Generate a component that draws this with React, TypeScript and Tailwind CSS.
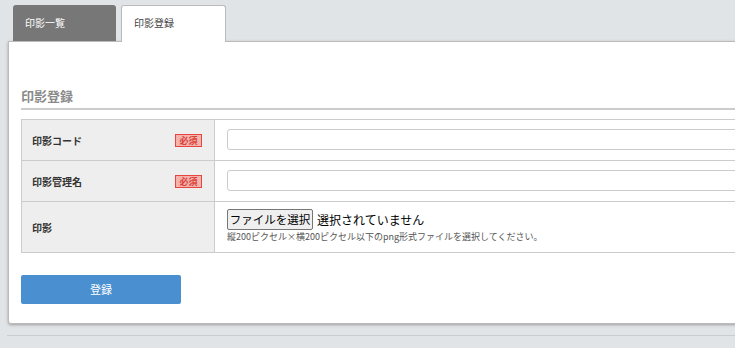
const jp = "font-['Meiryo','Noto_Sans_CJK_JP',sans-serif]";

function RequiredBadge() {
  return (
    <span className="inline-flex h-[13px] w-[27px] items-center justify-center border border-[#e5463f] bg-[#f5b3ac] text-[9px] leading-none text-[#d9433c]">
      必須
    </span>
  );
}

function Row({ label, required, children, tall }: { label: string; required?: boolean; children: React.ReactNode; tall?: boolean }) {
  return (
    <tr className={tall ? "h-[51px]" : "h-[41px]"}>
      <th className="border border-[#cccccc] bg-[#eeeeee] pl-[10px] pr-[12px] text-left align-middle">
        <div className="flex items-center justify-between">
          <span className="text-[10px] font-bold text-[#333]">{label}</span>
          {required && <RequiredBadge />}
        </div>
      </th>
      <td className="border border-[#cccccc] pl-[12px] align-middle">{children}</td>
    </tr>
  );
}

export default function App() {
  return (
    <div className={`h-[348px] w-[735px] overflow-hidden bg-[#e1e4e7] pt-[5px] ${jp}`}>
      <div className="flex h-[36px] gap-[5px] pl-[13px]">
        <div className="h-[36px] w-[103px] rounded-t-[3px] bg-[#777777] pl-[12px] pt-[10px] text-[10px] text-white">
          印影一覧
        </div>
        <div className="relative z-10 h-[37px] w-[105px] rounded-t-[3px] border border-b-0 border-[#bbbbbb] bg-white pl-[12px] pt-[9px] text-[10px] text-[#444]">
          印影登録
        </div>
      </div>
      <div className="ml-[8px] h-[283px] w-[800px] rounded-bl-[3px] border border-[#bbbbbb] bg-white pl-[12px] pt-[45px] shadow-[0_1px_3px_rgba(0,0,0,0.3)]">
        <div className="border-b-2 border-[#cccccc] pb-[3px] text-[13px] font-bold leading-[18px] text-[#8a8a8a]">
          印影登録
        </div>
        <table className="mt-[9px] w-[790px] table-fixed border-collapse">
          <colgroup>
            <col className="w-[193px]" />
            <col />
          </colgroup>
          <tbody>
            <Row label="印影コード" required>
              <div className="mb-[2px] h-[21px] w-[600px] rounded-[3px] border border-[#cccccc]" />
            </Row>
            <Row label="印影管理名" required>
              <div className="mb-[2px] h-[21px] w-[600px] rounded-[3px] border border-[#cccccc]" />
            </Row>
            <Row label="印影" tall>
              <div className="flex items-center gap-[4px]">
                <span className="flex h-[21px] w-[86px] items-center justify-center rounded-[2px] border border-[#767676] bg-[#efefef] text-[11.5px] text-black">
                  ファイルを選択
                </span>
                <span className="text-[12px] text-black">選択されていません</span>
              </div>
              <div className="mb-[2px] mt-[1px] text-[9px] leading-[12px] text-[#555]">
                縦200ピクセル×横200ピクセル以下のpng形式ファイルを選択してください。
              </div>
            </Row>
          </tbody>
        </table>
        <button className="mt-[22px] flex h-[29px] w-[160px] items-center justify-center rounded-[2px] bg-[#4a8fcf] text-[11px] text-white">
          登録
        </button>
      </div>
      <div className="ml-[7px] mt-[11px] border-t border-[#cccccc]" />
    </div>
  );
}
